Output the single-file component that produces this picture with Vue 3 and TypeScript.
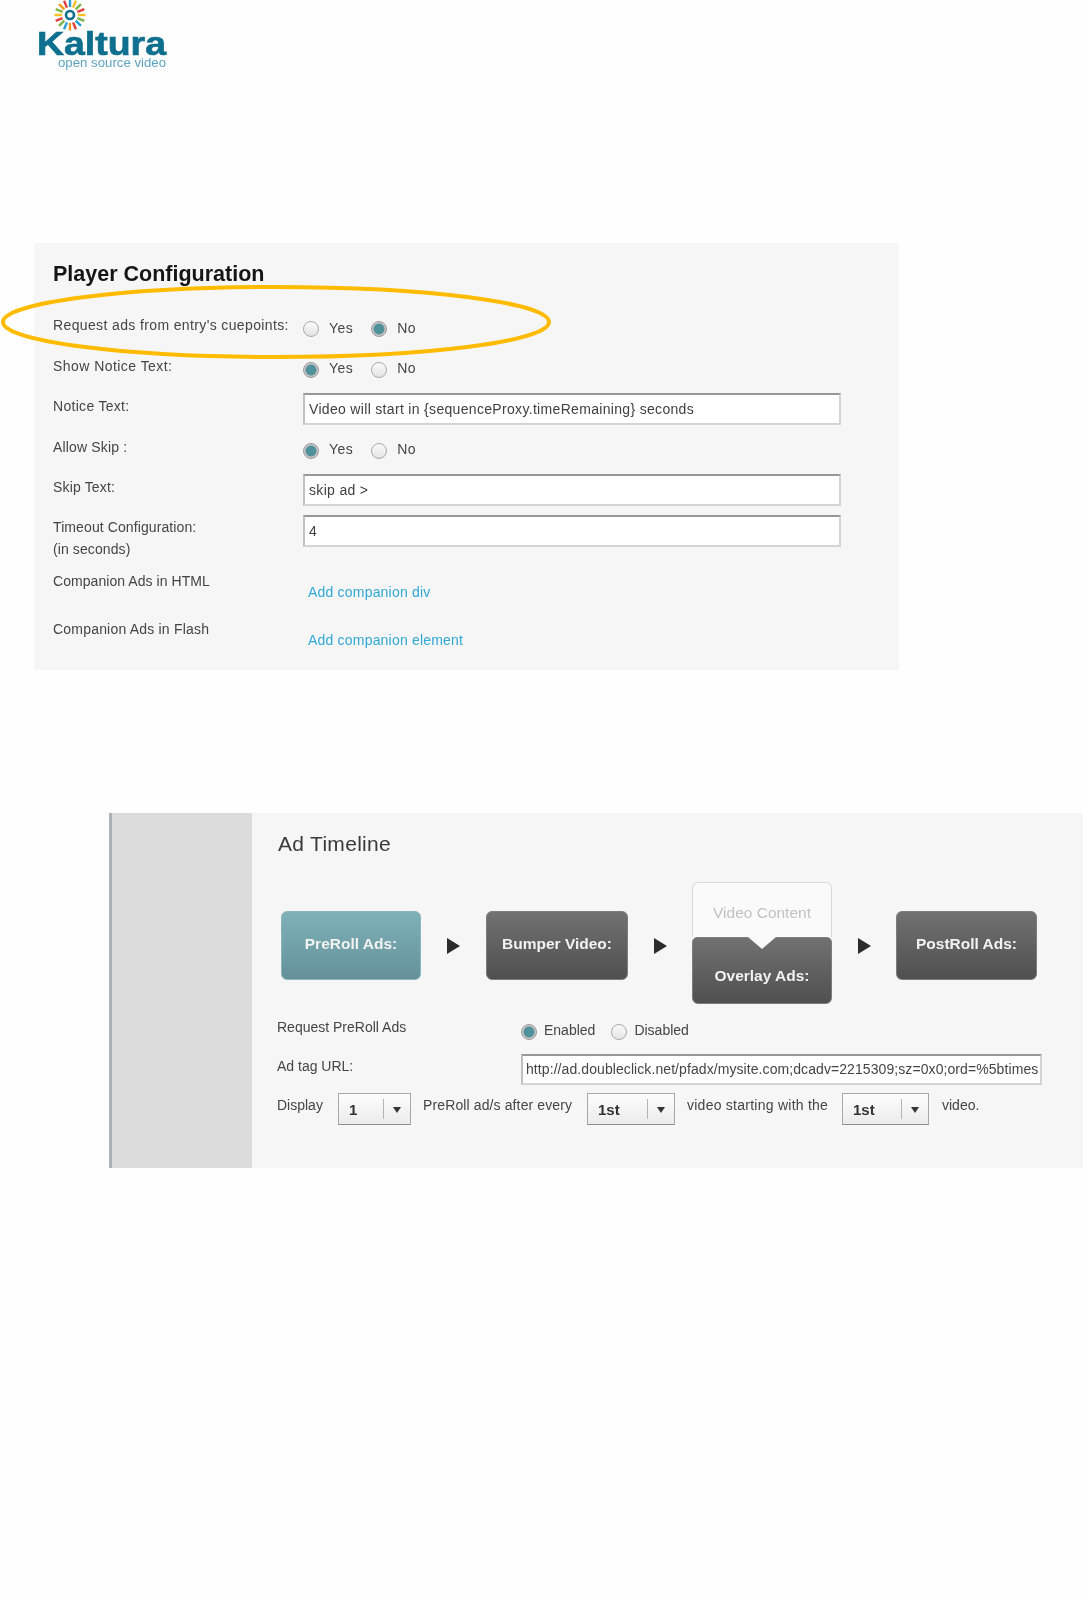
<script setup lang="ts">
const rayColors = ['#2a9fd6','#f5c020','#7ab648','#e2403c','#f5c020','#7ab648','#2a9fd6','#e2403c','#f39a1e','#2a9fd6','#7ab648','#e2403c','#f5c020','#7ab648','#f39a1e','#e2403c']
const rays = rayColors.map((color, i) => {
  const a = (i * 22.5 - 90) * Math.PI / 180
  return {
    color,
    x1: 50 + 8 * Math.cos(a), y1: 15 + 8 * Math.sin(a),
    x2: 50 + 15.5 * Math.cos(a), y2: 15 + 15.5 * Math.sin(a)
  }
})
</script>

<template>
  <div class="page">
    <header class="logo-wrap">
      <svg class="logo" width="150" height="72" viewBox="0 0 150 72">
        <line v-for="(r, i) in rays" :key="i" :x1="r.x1" :y1="r.y1" :x2="r.x2" :y2="r.y2" :stroke="r.color" stroke-width="2.4" />
        <circle cx="50" cy="15" r="4" fill="none" stroke="#0e6f8f" stroke-width="2.6" />
        <text x="17" y="55" class="logo-main" textLength="129" lengthAdjust="spacingAndGlyphs">Kaltura</text>
        <text x="38" y="67" class="logo-sub" textLength="108" lengthAdjust="spacingAndGlyphs">open source video</text>
      </svg>
    </header>

    <section class="config">
      <h2 class="config-title">Player Configuration</h2>

      <div class="row h41 r1">
        <div class="lbl sp37">Request ads from entry's cuepoints:</div>
        <div class="radios">
          <span class="radio"></span><span class="opt">Yes</span>
          <span class="radio on"></span><span class="opt">No</span>
        </div>
      </div>
      <div class="row h40">
        <div class="lbl sp45">Show Notice Text:</div>
        <div class="radios">
          <span class="radio on"></span><span class="opt">Yes</span>
          <span class="radio"></span><span class="opt">No</span>
        </div>
      </div>
      <div class="row h41">
        <div class="lbl sp30">Notice Text:</div>
        <div class="field up3">Video will start in {sequenceProxy.timeRemaining} seconds</div>
      </div>
      <div class="row h40">
        <div class="lbl">Allow Skip :</div>
        <div class="radios">
          <span class="radio on"></span><span class="opt">Yes</span>
          <span class="radio"></span><span class="opt">No</span>
        </div>
      </div>
      <div class="row h40">
        <div class="lbl">Skip Text:</div>
        <div class="field up3">skip ad &gt;</div>
      </div>
      <div class="row h54">
        <div class="lbl sp10">Timeout Configuration:<br />(in seconds)</div>
        <div class="field up2">4</div>
      </div>
      <div class="row h48">
        <div class="lbl sp06">Companion Ads in HTML</div>
        <a class="link">Add companion div</a>
      </div>
      <div class="row h51">
        <div class="lbl sp20">Companion Ads in Flash</div>
        <a class="link">Add companion element</a>
      </div>
    </section>

    <section class="timeline">
      <aside class="side"></aside>
      <div class="main">
        <h2 class="tl-title">Ad Timeline</h2>

        <div class="flow">
          <div class="box teal">PreRoll Ads:</div>
          <span class="arrow"></span>
          <div class="box gray wide">Bumper Video:</div>
          <span class="arrow"></span>
          <div class="stack">
            <div class="stack-top">Video Content</div>
            <div class="stack-bottom">Overlay Ads:<span class="notch"></span></div>
          </div>
          <span class="arrow"></span>
          <div class="box gray post">PostRoll Ads:</div>
        </div>

        <div class="f-row f-req">
          <div class="f-lbl">Request PreRoll Ads</div>
          <div class="radios tight">
            <span class="radio on"></span><span class="opt en">Enabled</span>
            <span class="radio"></span><span class="opt">Disabled</span>
          </div>
        </div>
        <div class="f-row f-url">
          <div class="f-lbl">Ad tag URL:</div>
          <div class="url">http://ad.doubleclick.net/pfadx/mysite.com;dcadv=2215309;sz=0x0;ord=%5btimes</div>
        </div>
        <div class="disp">
          <span class="d-text d1">Display</span>
          <div class="sel s1"><b>1</b><i class="sep"></i><span class="caret"></span></div>
          <span class="d-text d2">PreRoll ad/s after every</span>
          <div class="sel s2"><b>1st</b><i class="sep"></i><span class="caret"></span></div>
          <span class="d-text d3">video starting with the</span>
          <div class="sel s3"><b>1st</b><i class="sep"></i><span class="caret"></span></div>
          <span class="d-text d4">video.</span>
        </div>
      </div>
    </section>

    <svg class="ring" width="556" height="80" viewBox="0 0 556 80">
      <ellipse cx="276" cy="40" rx="273" ry="35" fill="none" stroke="#ffbb00" stroke-width="4" />
    </svg>
  </div>
</template>

<style scoped>
.page {
  position: relative;
  width: 1083px;
  height: 1598px;
  overflow: hidden;
  background: #fefefe;
  font-family: "Liberation Sans", Arial, sans-serif;
  color: #404040;
  filter: blur(0.4px);
}
.logo-wrap { height: 243px; padding-left: 20px; box-sizing: border-box; }
.logo { display: block; }
.logo-main { font: 700 34px "Liberation Sans", Arial, sans-serif; fill: #0e6f8f; stroke: #0e6f8f; stroke-width: 0.7px; }
.logo-sub { font: 400 12.5px "Liberation Sans", Arial, sans-serif; fill: #5ea3c0; }

.config {
  margin-left: 34px;
  width: 865px;
  height: 427px;
  box-sizing: border-box;
  padding: 17px 0 0 19px;
  background: #f6f6f6;
}
.config-title {
  margin: 0 0 26px;
  font-size: 21.5px;
  line-height: 29px;
  font-weight: 700;
  color: #151515;
}
.row { display: grid; grid-template-columns: 250px 538px; align-items: start; }
.h40 { height: 40px; } .h41 { height: 41px; } .h48 { height: 48px; } .h51 { height: 51px; } .h54 { height: 54px; }
.lbl { font-size: 14px; line-height: 21.5px; letter-spacing: 0.16px; color: #454545; }
.sp37 { letter-spacing: 0.37px; } .sp45 { letter-spacing: 0.45px; } .sp30 { letter-spacing: 0.3px; }
.sp10 { letter-spacing: 0.1px; } .sp06 { letter-spacing: 0.06px; } .sp20 { letter-spacing: 0.2px; }

.radios { display: flex; align-items: center; height: 20px; margin-top: 2px; font-size: 14px; color: #454545; }
.radio {
  width: 14px; height: 14px; margin-top: 3px; flex: none;
  border: 1px solid #a9a9a9; border-radius: 50%;
  background: linear-gradient(#fafafa, #e4e4e4);
}
.radio.on {
  background: radial-gradient(circle, #4f929c 0 4.5px, #5f8f97 5px, #c8c8c8 6px);
  border-color: #999;
}
.opt { margin: 0 18px 0 10px; letter-spacing: 0.45px; line-height: 20px; }
.r1 .opt { margin-top: 2px; }

.field {
  width: 538px; height: 32px; box-sizing: border-box;
  padding: 0 4px;
  border: 2px solid #d4d4d4; border-top-color: #979797; border-left-color: #c0c0c0;
  background: #fff;
  font-size: 14px; line-height: 28px; color: #404040; letter-spacing: 0.32px;
}
.up3 { margin-top: -3px; } .up2 { margin-top: -2px; }
.link { margin: 11px 0 0 5px; font-size: 14px; line-height: 21px; letter-spacing: 0.2px; color: #2fa8d5; }

.timeline {
  display: flex;
  margin: 143px 0 0 109px;
  width: 974px;
  height: 355px;
}
.side { width: 143px; flex: none; box-sizing: border-box; background: #dcdcdc; border-left: 3px solid #a9b3b8; }
.main { flex: 1; background: #f6f6f6; padding: 17px 0 0 26px; box-sizing: border-box; min-width: 0; }
.tl-title { margin: 0; font-size: 21px; line-height: 28px; font-weight: 400; letter-spacing: 0.3px; color: #3a3a3a; }

.flow { display: flex; align-items: center; height: 122px; margin: 24px 0 0 3px; }
.box {
  width: 140px; height: 69px; margin-top: 5px; flex: none; box-sizing: border-box;
  display: flex; align-items: center; justify-content: center;
  border-radius: 6px;
  font-size: 15.5px; font-weight: 700; color: #f2f2f2; padding-bottom: 3px;
}
.box.wide { width: 142px; }
.box.post { width: 141px; }
.teal { background: linear-gradient(#7fb1b8, #64919a); border: 1px solid #8db6bc; }
.gray { background: linear-gradient(#717171, #505050); border: 1px solid #7d7d7d; }
.arrow {
  flex: none; width: 0; height: 0; margin: 5px 25px 0 26px;
  border-left: 13px solid #2c2c2c;
  border-top: 8px solid transparent; border-bottom: 8px solid transparent;
}
.arrow:first-of-type { margin-right: 26px; }
.stack { width: 140px; height: 122px; flex: none; display: flex; flex-direction: column; border-radius: 6px; }
.stack-top {
  height: 55px; box-sizing: border-box; flex: none;
  border: 1px solid #d8d8d8; border-bottom: none; border-radius: 6px 6px 0 0;
  background: #fafafa; color: #c2c2c2; font-size: 15.5px; text-align: center; padding-top: 20px; line-height: 20px;
}
.stack-bottom {
  position: relative; flex: 1;
  background: linear-gradient(#717171, #505050); border-radius: 5px 5px 6px 6px; border: 1px solid #7d7d7d; box-sizing: border-box;
  color: #f2f2f2; font-size: 15.5px; font-weight: 700; text-align: center; padding-top: 28px; line-height: 20px;
}
.notch {
  position: absolute; left: 55px; top: -1px; width: 0; height: 0;
  border-left: 14px solid transparent; border-right: 14px solid transparent; border-top: 12px solid #fafafa;
}

.f-row { display: flex; align-items: flex-start; margin-left: -1px; }
.f-lbl { width: 244px; flex: none; font-size: 14px; line-height: 20px; color: #454545; }
.f-req { margin-top: 13px; height: 39px; }
.f-req .radios { margin: 3px 0 0 0; }
.tight .opt { margin: 0 16px 0 7px; letter-spacing: 0; }
.f-url { height: 37px; }
.url {
  width: 521px; height: 31px; box-sizing: border-box; margin-top: -2px;
  border: 2px solid #d4d4d4; border-top-color: #979797; border-left-color: #c0c0c0;
  background: #fff; padding: 0 3px;
  font-size: 14px; line-height: 27px; letter-spacing: 0.08px; color: #454545; white-space: nowrap; overflow: hidden;
}
.disp { display: flex; align-items: flex-start; height: 32px; margin-left: -1px; }
.d-text { font-size: 14px; line-height: 20px; color: #454545; margin-top: 2px; white-space: nowrap; }
.d1 { width: 61px; }
.d2 { width: 164px; margin-left: 12px; letter-spacing: 0.12px; }
.d3 { width: 155px; margin-left: 12px; letter-spacing: 0.25px; }
.d4 { margin-left: 13px; }
.sel {
  position: relative; flex: none; height: 32px; box-sizing: border-box;
  border: 1px solid #a8a8a8; border-bottom-color: #8e8e8e;
  background: linear-gradient(#fdfdfd, #ebebeb);
  padding-left: 10px;
  font-size: 15px; line-height: 32px; color: #333;
}
.sel b { font-weight: 700; }
.s1 { width: 73px; } .s2 { width: 88px; } .s3 { width: 87px; }
.sep { position: absolute; right: 26px; top: 5px; height: 20px; width: 1px; background: #b5b5b5; }
.caret {
  position: absolute; right: 9px; top: 13px; width: 0; height: 0;
  border-left: 4.5px solid transparent; border-right: 4.5px solid transparent; border-top: 6px solid #333;
}
.ring { position: absolute; left: 0; top: 282px; pointer-events: none; }
</style>
